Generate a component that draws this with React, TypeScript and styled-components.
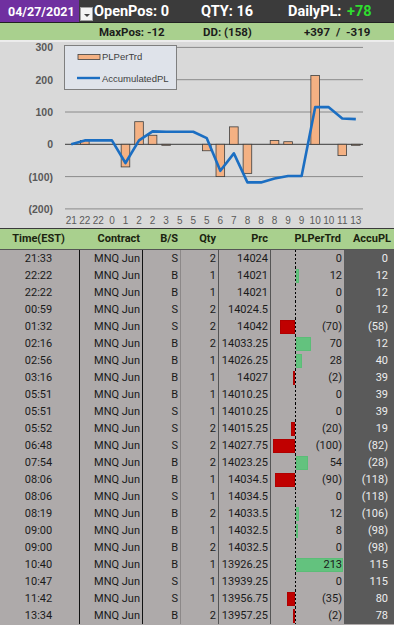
import React from 'react';
import styled, {createGlobalStyle} from "styled-components";

type Trade = [string, string, number, string, number, number];

const trades: Trade[] = [
    ['21:33', 'S', 2, '14024', 0, 0],
    ['22:22', 'B', 1, '14021', 12, 12],
    ['22:22', 'B', 1, '14021', 0, 12],
    ['00:59', 'S', 2, '14024.5', 0, 12],
    ['01:32', 'S', 2, '14042', -70, -58],
    ['02:16', 'B', 2, '14033.25', 70, 12],
    ['02:56', 'B', 1, '14026.25', 28, 40],
    ['03:16', 'B', 1, '14027', -2, 39],
    ['05:51', 'B', 1, '14010.25', 0, 39],
    ['05:51', 'S', 1, '14010.25', 0, 39],
    ['05:52', 'S', 2, '14015.25', -20, 19],
    ['06:48', 'S', 2, '14027.75', -100, -82],
    ['07:54', 'B', 2, '14023.25', 54, -28],
    ['08:06', 'B', 1, '14034.5', -90, -118],
    ['08:06', 'S', 1, '14034.5', 0, -118],
    ['08:19', 'B', 2, '14033.5', 12, -106],
    ['09:00', 'B', 1, '14032.5', 8, -98],
    ['09:00', 'B', 2, '14032.5', 0, -98],
    ['10:40', 'B', 1, '13926.25', 213, 115],
    ['10:47', 'S', 1, '13939.25', 0, 115],
    ['11:42', 'S', 1, '13956.75', -35, 80],
    ['13:34', 'B', 2, '13957.25', -2, 78],
];

const fmt = (n: number) => (n < 0 ? `(${Math.abs(n)})` : `${n}`);

// chart geometry
const catX = (i: number) => 64.5 + 13.55 * (i + 0.5);
const valY = (v: number) => 102.3 - v * 0.323;
const ticks = [300, 200, 100, 0, -100, -200];
const BAR_SCALE = 0.22;

const Chart = () => {
    const points = trades.map((t, i) => `${catX(i)},${valY(t[5])}`).join(' ');
    return (
        <svg width="394" height="186" viewBox="0 0 394 186">
            {ticks.map(v => (
                <g key={v}>
                    <line x1="65" x2="363" y1={valY(v)} y2={valY(v)}
                          stroke={v === 0 ? '#5a5a5a' : '#8a8a8a'} strokeWidth={v === 0 ? 1.3 : 1}/>
                    <text x="53" y={valY(v) + 4} textAnchor="end" fontSize="10.5" fontWeight="700"
                          fill="#595959" fontFamily="Liberation Sans, Arial, sans-serif">{fmt(v)}</text>
                </g>
            ))}
            {trades.map((t, i) => {
                const v = t[4];
                if (v === 0) return null;
                const y = Math.min(valY(v), valY(0));
                const h = Math.max(Math.abs(v) * 0.323, 1);
                return <rect key={i} x={catX(i) - 4.3} y={y} width="8.6" height={h}
                             fill="#f4b183" stroke="#3f3f3f" strokeWidth="0.8"/>;
            })}
            <polyline points={points} fill="none" stroke="#1b6ec2" strokeWidth="2.6" strokeLinejoin="round"/>
            {trades.map((t, i) => (
                <text key={i} x={catX(i)} y="182" textAnchor="middle" fontSize="10" fill="#595959"
                      fontFamily="Liberation Sans, Arial, sans-serif">{parseInt(t[0], 10)}</text>
            ))}
            <rect x="64.5" y="3.5" width="112" height="44" fill="#dfe3ea" stroke="#7f7f7f"/>
            <rect x="78" y="12.5" width="22" height="5" fill="#f4b183" stroke="#3f3f3f" strokeWidth="0.8"/>
            <text x="102" y="18" fontSize="9.5" fill="#404040" fontFamily="Liberation Sans, Arial, sans-serif">PLPerTrd</text>
            <line x1="77" x2="100" y1="36" y2="36" stroke="#1b6ec2" strokeWidth="2.4"/>
            <text x="102" y="39.5" fontSize="9.5" fill="#404040" fontFamily="Liberation Sans, Arial, sans-serif">AccumulatedPL</text>
        </svg>
    );
};

const App = () => {
    return (
        <Page>
            <GlobalStyle/>
            <TopBar>
                <DateCell>04/27/2021</DateCell>
                <FilterButton/>
                <TopStat $width={107}>OpenPos: 0</TopStat>
                <TopStat $width={87}>QTY: 16</TopStat>
                <TopStat>DailyPL: <Gain>+78</Gain></TopStat>
            </TopBar>
            <StatBar>
                <StatItem $width={104}>MaxPos: -12</StatItem>
                <StatItem $width={101}>DD: (158)</StatItem>
                <StatItem>+397 <Slash>/</Slash> -319</StatItem>
            </StatBar>
            <ChartBox>
                <Chart/>
            </ChartBox>
            <HeadRow>
                <HeadCell $align="center">Time(EST)</HeadCell>
                <HeadCell>Contract</HeadCell>
                <HeadCell>B/S</HeadCell>
                <HeadCell>Qty</HeadCell>
                <HeadCell>Prc</HeadCell>
                <HeadCell>PLPerTrd</HeadCell>
                <HeadCell>AccuPL</HeadCell>
            </HeadRow>
            {trades.map((t, i) => (
                <Row key={i}>
                    <Cell $align="center" $line="#111">{t[0]}</Cell>
                    <Cell $line="#111">MNQ Jun</Cell>
                    <Cell $line="#8c8888">{t[1]}</Cell>
                    <Cell $line="#555">{t[2]}</Cell>
                    <Cell $line="#555">{t[3]}</Cell>
                    <PlCell>
                        {t[4] !== 0 && (
                            <DataBar $neg={t[4] < 0} style={{width: Math.max(Math.abs(t[4]) * BAR_SCALE, 1.5)}}/>
                        )}
                        <PlText>{fmt(t[4])}</PlText>
                    </PlCell>
                    <AccuCell>{fmt(t[5])}</AccuCell>
                </Row>
            ))}
        </Page>
    );
};

export default App;

const GlobalStyle = createGlobalStyle`
  html, body {
    margin: 0;
    padding: 0;
    background: #aeaaaa;
  }

  body {
    font-family: Roboto, "Liberation Sans", Arial, sans-serif;
    overflow: hidden;
  }
`

const Page = styled.div`
  width: 394px;
`

const TopBar = styled.div`
  display: flex;
  align-items: center;
  height: 22px;
  background-color: #3b3b3b;
  color: #fff;
  font-weight: 700;
`

const DateCell = styled.div`
  display: flex;
  align-items: center;
  width: 79px;
  height: 100%;
  box-sizing: border-box;
  padding-left: 8px;
  background-color: #7030a0;
  font-size: 12.5px;
`

const FilterButton = styled.div`
  position: relative;
  align-self: flex-end;
  width: 13px;
  height: 14px;
  margin: 0 1px 1px 1px;
  box-sizing: border-box;
  background-color: #f4f4f4;
  border: 1px solid #a0a0a0;

  &:after {
    content: "";
    position: absolute;
    left: 3px;
    top: 6px;
    border-left: 3px solid transparent;
    border-right: 3px solid transparent;
    border-top: 3px solid #444;
  }
`

const TopStat = styled.div<{ $width?: number }>`
  width: ${p => (p.$width ? `${p.$width}px` : 'auto')};
  flex: ${p => (p.$width ? 'none' : '1')};
  font-size: 14.5px;
  white-space: nowrap;
`

const Gain = styled.span`
  color: #2fdc2f;
  margin-left: 2px;
`

const StatBar = styled.div`
  display: flex;
  align-items: center;
  height: 17px;
  padding-left: 99px;
  border-top: 1px solid #222;
  background-color: #a9d08e;
  color: #1c1c1c;
  font-size: 11.5px;
  font-weight: 700;
`

const StatItem = styled.div<{ $width?: number }>`
  width: ${p => (p.$width ? `${p.$width}px` : 'auto')};
  white-space: nowrap;
`

const Slash = styled.span`
  margin: 0 3px;
`

const ChartBox = styled.div`
  height: 186px;
  border-top: 2px solid #ececec;
  background-color: #d9d9d9;

  & svg {
    display: block;
  }
`

const columns = '80px 63px 38px 38px 52px 73px 50px';

const HeadRow = styled.div`
  display: grid;
  grid-template-columns: ${columns};
  height: 20px;
  border-top: 1px solid #3a3a3a;
  border-bottom: 1px solid #555;
  background-color: #a9d08e;
`

const HeadCell = styled.div<{ $align?: string }>`
  padding-right: 3px;
  text-align: ${p => p.$align || 'right'};
  font-size: 11px;
  font-weight: 700;
  line-height: 20px;
  color: #1b2410;
`

const Row = styled.div`
  display: grid;
  grid-template-columns: ${columns};
  height: 17px;
  background-color: #aeaaaa;
  color: #1a1a1a;
  font-size: 11px;
  line-height: 17px;
`

const Cell = styled.div<{ $align?: string; $line: string }>`
  box-sizing: border-box;
  padding-right: 2px;
  text-align: ${p => p.$align || 'right'};
  border-right: 1px solid ${p => p.$line};
  white-space: nowrap;
`

const PlCell = styled.div`
  position: relative;
  padding-right: 2px;
  text-align: right;

  &:before {
    content: "";
    position: absolute;
    left: 24px;
    top: 0;
    bottom: 0;
    width: 1px;
    background: repeating-linear-gradient(to bottom, #000 0 2px, transparent 2px 4px);
  }
`

const DataBar = styled.div<{ $neg: boolean }>`
  position: absolute;
  top: 1.5px;
  height: 14px;
  box-sizing: border-box;
  ${p => (p.$neg ? 'right: 49px;' : 'left: 25px;')}
  background-color: ${p => (p.$neg ? '#c00000' : '#63c27e')};
  border: 1px solid ${p => (p.$neg ? '#b00000' : '#5bbd77')};
`

const PlText = styled.span`
  position: relative;
`

const AccuCell = styled.div`
  padding-right: 6px;
  text-align: right;
  background-color: #5a5a5a;
  color: #ededed;
`
